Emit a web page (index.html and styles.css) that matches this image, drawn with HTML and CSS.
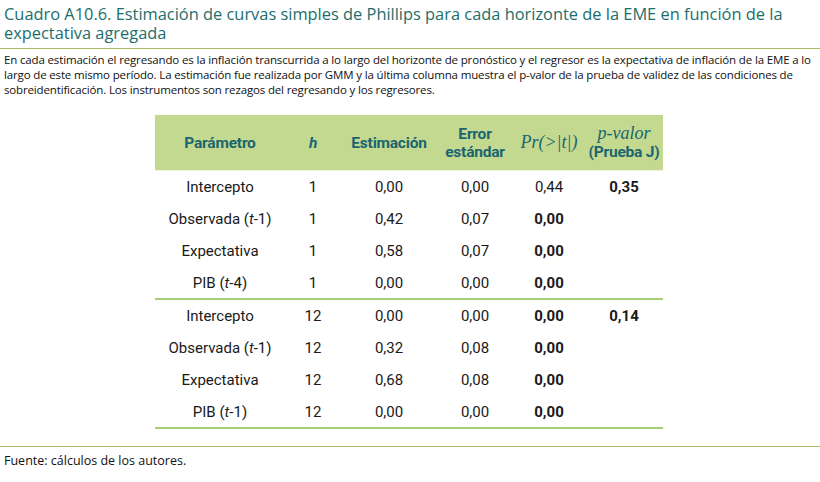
FILE: index.html
```html
<!DOCTYPE html>
<html lang="es">
<head>
<meta charset="utf-8">
<link rel="stylesheet" href="styles.css">
</head>
<body>
<div class="page">
  <h1 class="title">Cuadro A10.6. Estimación de curvas simples de Phillips para cada horizonte de la EME en función de la expectativa agregada</h1>
  <p class="note">En cada estimación el regresando es la inflación transcurrida a lo largo del horizonte de pronóstico y el regresor es la expectativa de inflación de la EME a lo largo de este mismo período. La estimación fue realizada por GMM y la última columna muestra el p-valor de la prueba de validez de las condiciones de sobreidentificación. Los instrumentos son rezagos del regresando y los regresores.</p>
  <div class="table-wrap">
    <table class="data">
      <thead>
        <tr>
          <th class="c-param">Parámetro</th>
          <th class="c-h"><i class="var">h</i></th>
          <th class="c-est">Estimación</th>
          <th class="c-err">Error<br>estándar</th>
          <th class="c-pr"><span class="math">Pr(&gt;|t|)</span></th>
          <th class="c-pv"><span class="math">p-valor</span><br>(Prueba J)</th>
        </tr>
      </thead>
      <tbody>
        <tr><td>Intercepto</td><td>1</td><td>0,00</td><td>0,00</td><td>0,44</td><td class="b">0,35</td></tr>
        <tr><td>Observada (<i>t</i>-1)</td><td>1</td><td>0,42</td><td>0,07</td><td class="b">0,00</td><td></td></tr>
        <tr><td>Expectativa</td><td>1</td><td>0,58</td><td>0,07</td><td class="b">0,00</td><td></td></tr>
        <tr class="grp-end"><td>PIB (<i>t</i>-4)</td><td>1</td><td>0,00</td><td>0,00</td><td class="b">0,00</td><td></td></tr>
        <tr><td>Intercepto</td><td>12</td><td>0,00</td><td>0,00</td><td class="b">0,00</td><td class="b">0,14</td></tr>
        <tr><td>Observada (<i>t</i>-1)</td><td>12</td><td>0,32</td><td>0,08</td><td class="b">0,00</td><td></td></tr>
        <tr><td>Expectativa</td><td>12</td><td>0,68</td><td>0,08</td><td class="b">0,00</td><td></td></tr>
        <tr class="grp-end"><td>PIB (<i>t</i>-1)</td><td>12</td><td>0,00</td><td>0,00</td><td class="b">0,00</td><td></td></tr>
      </tbody>
    </table>
  </div>
  <p class="source">Fuente: cálculos de los autores.</p>
</div>
</body>
</html>
```

FILE: styles.css
```css
html, body {
  margin: 0;
  padding: 0;
  background: #ffffff;
}

.page {
  width: 820px;
  font-family: "Open Sans", "Noto Sans", sans-serif;
  color: #1a1a1a;
}

.title {
  margin: 0;
  padding: 4px 4px 0 4px;
  height: 44px;
  font-size: 16.4px;
  line-height: 19px;
  font-weight: 400;
  color: #1d6e6c;
  border-bottom: 1px solid #a9b96a;
}

.note {
  margin: 0;
  padding: 3px 4px 0 4px;
  font-size: 11.5px;
  line-height: 15px;
  letter-spacing: -0.15px;
  color: #111;
  height: 63px;
}

.table-wrap {
  display: flex;
  justify-content: center;
}

.data {
  border-collapse: collapse;
  font-family: Roboto, "Open Sans", sans-serif;
  font-size: 15px;
  color: #1a1a1a;
  margin-left: -2px;
}

.data thead th {
  background: #c3d98f;
  color: #1b6570;
  font-weight: 700;
  font-size: 15.5px;
  letter-spacing: -0.2px;
  height: 55px;
  padding: 0;
  line-height: 18px;
  text-align: center;
  vertical-align: middle;
  border-bottom: 1px solid #eef3e2;
}

.data th .var {
  font-style: italic;
  font-weight: 700;
}

.data th .math {
  font-family: "Liberation Serif", "DejaVu Serif", serif;
  font-style: italic;
  font-weight: 400;
  font-size: 18px;
  letter-spacing: 0;
}

.c-param { width: 130px; }
.c-h { width: 56px; }
.c-est { width: 96px; }
.c-err { width: 76px; }
.c-pr { width: 72px; }
.c-pv { width: 78px; }

.data td {
  height: 32px;
  padding: 0;
  text-align: center;
  vertical-align: middle;
}

.data td.b {
  font-weight: 700;
}

.data tr.grp-end td {
  height: 31px;
  border-bottom: 2px solid #a9cf76;
}

.source {
  margin: 17px 0 0 0;
  padding: 6px 4px 0 4px;
  border-top: 1px solid #a9b96a;
  font-size: 12.5px;
  line-height: 16px;
  color: #111;
}
```
